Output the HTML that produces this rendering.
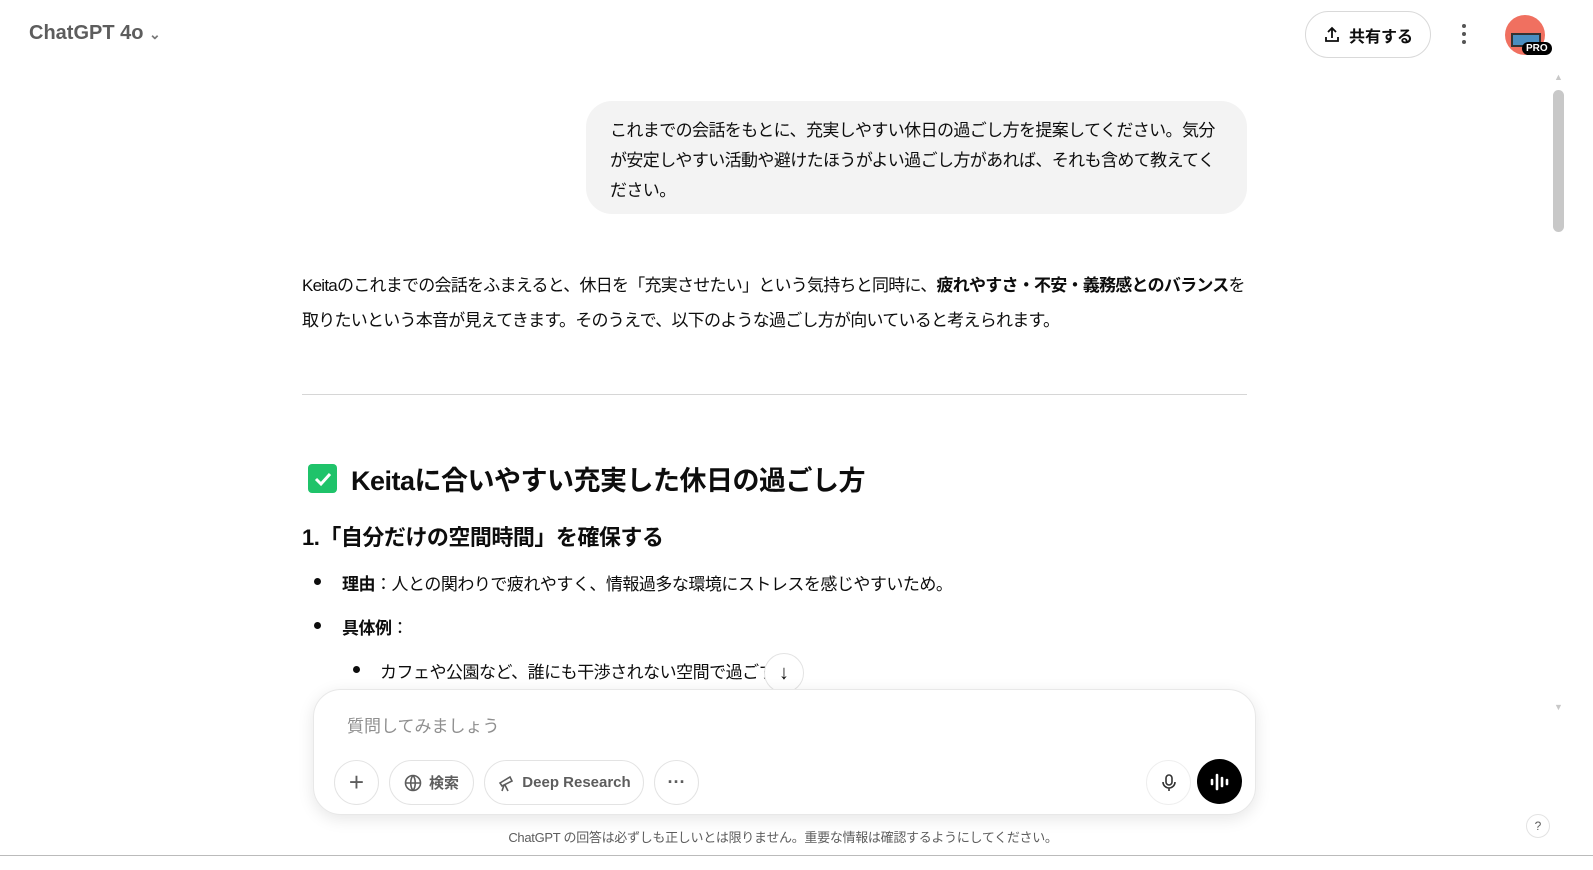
<!DOCTYPE html>
<html><head><meta charset="utf-8"><style>
*{margin:0;padding:0;box-sizing:border-box}
body{width:1593px;height:870px;overflow:hidden;background:#fff;font-family:"Liberation Sans","Noto Sans CJK JP",sans-serif;color:#0d0d0d;position:relative}
.abs{position:absolute}
.title{left:29px;top:22px;font-size:20px;color:#5d5d5d;font-weight:600}
.share{left:1305px;top:11px;width:126px;height:47px;border:1px solid #d9d9d9;border-radius:24px;font-size:16px;font-weight:600;display:flex;align-items:center;justify-content:center;gap:8px}
.user{left:586px;top:101px;width:661px;height:113px;background:#f3f3f3;border-radius:26px;padding:15px 24px;font-size:17px;line-height:30px;letter-spacing:-0.6px;white-space:nowrap}
.p{left:302px;font-size:17px;line-height:35px;width:960px;letter-spacing:-0.75px;white-space:nowrap}
hr{position:absolute;left:302px;top:394px;width:945px;border:0;border-top:1px solid #d6d6d6}
.h2{left:308px;top:459px;font-size:27px;font-weight:700;display:flex;align-items:center;gap:14px;letter-spacing:-0.5px}
.chk{width:29px;height:29px;background:#1fc36a;border-radius:4px;display:flex;align-items:center;justify-content:center}
.h3{left:302px;top:520px;font-size:22px;font-weight:700;letter-spacing:-0.5px}
.li{font-size:17px;letter-spacing:-0.5px}
.dot{position:absolute;width:7px;height:7px;border-radius:50%;background:#0d0d0d}
.comp{left:313px;top:689px;width:943px;height:126px;border-radius:28px;background:#fff;box-shadow:0 4px 16px rgba(0,0,0,.1);border:1px solid #e8e8e8}
.btn{position:absolute;top:70px;height:45px;border:1px solid #e3e3e3;border-radius:23px;display:flex;align-items:center;justify-content:center;gap:7px;font-size:15px;color:#5d5d5d;font-weight:600}
</style></head><body>
<div class="abs title">ChatGPT 4o <span style="font-size:14px;color:#777">&#8964;</span></div>
<div class="abs share"><svg width="18" height="18" viewBox="0 0 18 18" fill="none" stroke="#0d0d0d" stroke-width="1.8"><path d="M9 12V3M5 6l4-4 4 4M3 11v4h12v-4"/></svg>共有する</div>
<div class="abs" style="left:1462px;top:24px"><div style="width:4px;height:4px;border-radius:50%;background:#555;margin-bottom:4px"></div><div style="width:4px;height:4px;border-radius:50%;background:#555;margin-bottom:4px"></div><div style="width:4px;height:4px;border-radius:50%;background:#555"></div></div>
<div class="abs" style="left:1505px;top:15px;width:40px;height:40px;border-radius:50%;background:#f07060;overflow:hidden"><div style="position:absolute;left:6px;top:18px;width:30px;height:14px;background:#4a8ec0;border:2px solid #333"></div></div>
<div class="abs" style="left:1522px;top:42px;background:#000;color:#fff;font-size:10px;font-weight:700;padding:1px 4px;border-radius:7px">PRO</div>
<div class="abs" style="left:1553px;top:90px;width:11px;height:142px;background:#c8c8c8;border-radius:6px"></div>
<div class="abs" style="left:1554px;top:72px;font-size:9px;color:#c8c8c8">▲</div>
<div class="abs" style="left:1554px;top:702px;font-size:9px;color:#c8c8c8">▼</div>
<div class="abs user">これまでの会話をもとに、充実しやすい休日の過ごし方を提案してください。気分<br>が安定しやすい活動や避けたほうがよい過ごし方があれば、それも含めて教えてく<br>ださい。</div>
<div class="abs p" style="top:268px">Keitaのこれまでの会話をふまえると、休日を「充実させたい」という気持ちと同時に、<b>疲れやすさ・不安・義務感とのバランス</b>を<br>取りたいという本音が見えてきます。そのうえで、以下のような過ごし方が向いていると考えられます。</div>
<hr>
<div class="abs h2"><div class="chk"><svg width="20" height="20" viewBox="0 0 20 20" fill="none" stroke="#fff" stroke-width="3"><path d="M3 10l5 5 9-10"/></svg></div>Keitaに合いやすい充実した休日の過ごし方</div>
<div class="abs h3">1.「自分だけの空間時間」を確保する</div>
<div class="dot" style="left:314px;top:578px"></div><div class="abs li" style="left:342px;top:570px"><b>理由</b>：人との関わりで疲れやすく、情報過多な環境にストレスを感じやすいため。</div>
<div class="dot" style="left:314px;top:622px"></div><div class="abs li" style="left:342px;top:614px"><b>具体例</b>：</div>
<div class="dot" style="left:353px;top:666px"></div><div class="abs li" style="left:380px;top:658px">カフェや公園など、誰にも干渉されない空間で過ごす</div>
<div class="abs" style="left:764px;top:653px;width:40px;height:40px;border-radius:50%;border:1px solid #e3e3e3;background:#fff;display:flex;align-items:center;justify-content:center;font-size:20px">↓</div>
<div class="abs comp">
<div class="abs" style="left:33px;top:22px;font-size:17px;color:#8f8f8f">質問してみましょう</div>
<div class="btn" style="left:20px;width:45px;font-size:26px;font-weight:300">+</div>
<div class="btn" style="left:75px;width:85px"><svg width="18" height="18" viewBox="0 0 18 18" fill="none" stroke="#5d5d5d" stroke-width="1.6"><circle cx="9" cy="9" r="7.5"/><path d="M1.5 9h15M9 1.5c-3 3.5-3 11.5 0 15M9 1.5c3 3.5 3 11.5 0 15"/></svg>検索</div>
<div class="btn" style="left:170px;width:160px"><svg width="18" height="18" viewBox="0 0 18 18" fill="none" stroke="#5d5d5d" stroke-width="1.6"><path d="M3 9l10-6 2 4-10 5zM7 11l-2 6M8 11l3 6"/></svg>Deep Research</div>
<div class="btn" style="left:340px;width:45px;font-size:18px;font-weight:700">···</div>
<div class="abs" style="left:832px;top:70px;width:45px;height:45px;border-radius:50%;border:1px solid #eee;display:flex;align-items:center;justify-content:center"><svg width="16" height="18" viewBox="0 0 16 18" fill="none" stroke="#333" stroke-width="1.6"><rect x="5" y="1" width="6" height="10" rx="3"/><path d="M2 8a6 6 0 0012 0M8 14v3"/></svg></div>
<div class="abs" style="left:883px;top:69px;width:45px;height:45px;border-radius:50%;background:#000;display:flex;align-items:center;justify-content:center"><svg width="22" height="20" viewBox="0 0 22 20" stroke="#fff" stroke-width="2.6" stroke-linecap="round"><path d="M3 8v4M8 3v14M13 6v8M18 8v4"/></svg></div>
</div>
<div class="abs" style="left:0;width:1566px;text-align:center;top:827px;font-size:13px;color:#5d5d5d;letter-spacing:-0.3px">ChatGPT の回答は必ずしも正しいとは限りません。重要な情報は確認するようにしてください。</div>
<div class="abs" style="left:1526px;top:814px;width:24px;height:24px;border-radius:50%;border:1px solid #e3e3e3;font-size:12px;color:#5d5d5d;text-align:center;line-height:22px">?</div>
<div class="abs" style="left:0;top:855px;width:1593px;height:1px;background:#bbb"></div>
</body></html>
